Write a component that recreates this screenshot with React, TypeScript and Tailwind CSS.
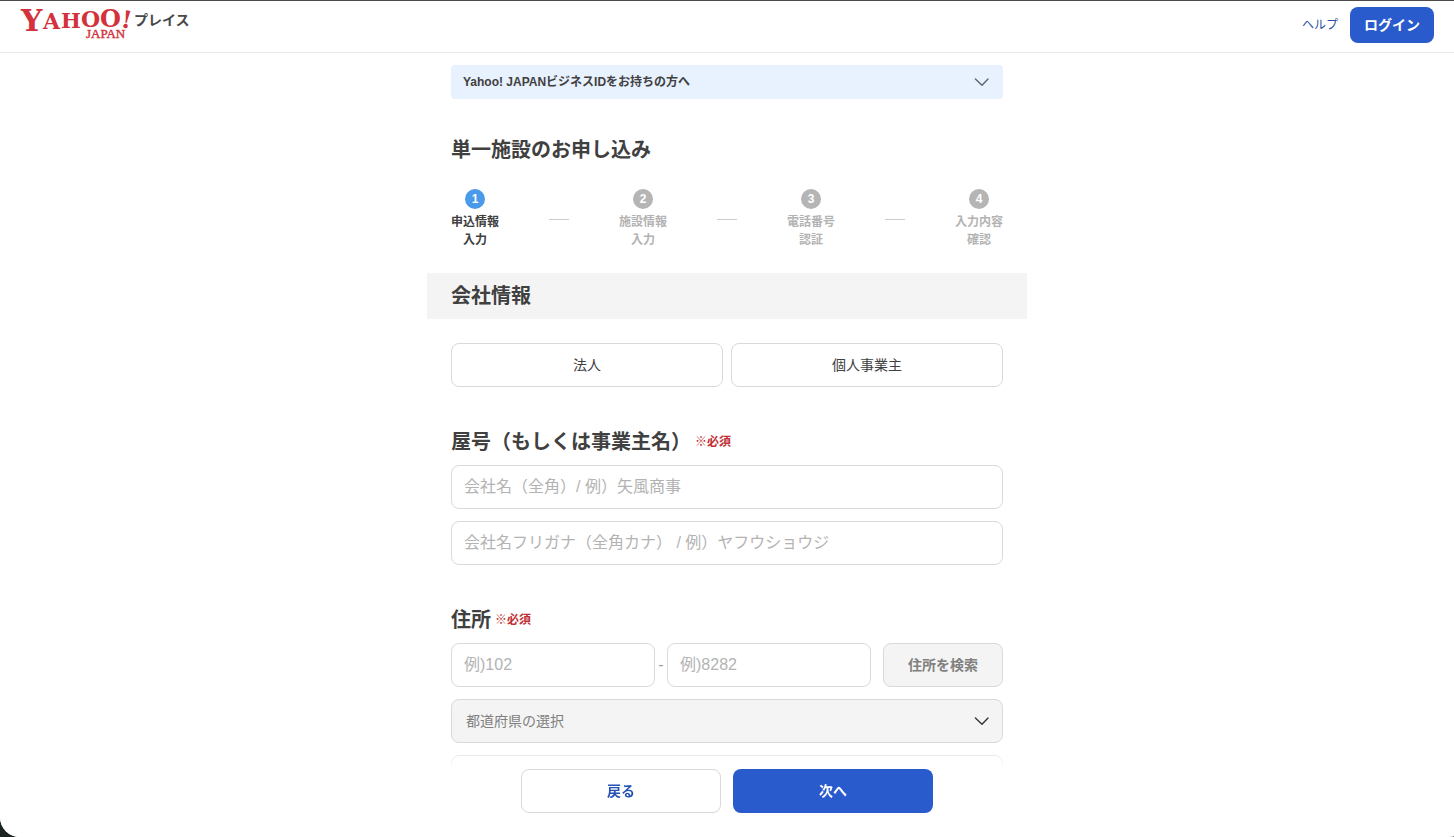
import { useState } from "react";
import type { ReactNode } from "react";

interface Step {
  id: number;
  lines: [string, string];
}

const steps: Step[] = [
  { id: 1, lines: ["申込情報", "入力"] },
  { id: 2, lines: ["施設情報", "入力"] },
  { id: 3, lines: ["電話番号", "認証"] },
  { id: 4, lines: ["入力内容", "確認"] },
];

const inputClass =
  "h-11 w-full min-w-0 rounded-lg border border-[#d9d9d9] bg-white px-3 text-base text-[#404040] placeholder:text-[#b3b3b3]";

function Logo() {
  return (
    <a href="#" className="flex items-start" aria-label="Yahoo! JAPAN プレイス">
      <svg
        width="114"
        height="34"
        viewBox="0 0 114 34"
        fill="#d3323c"
        fontFamily="'DejaVu Serif', serif"
        fontWeight="700"
        className="overflow-visible"
      >
        <text x="1" y="24" fontSize="30">Y</text>
        <text x="23" y="22" fontSize="22">A</text>
        <text x="41" y="21" fontSize="21">H</text>
        <text x="61" y="20" fontSize="22">O</text>
        <text x="80" y="20" fontSize="24">O</text>
        <text x="0" y="0" fontSize="24" transform="translate(100 20) rotate(10)">!</text>
        <text
          x="66"
          y="31"
          fontSize="13"
          fontFamily="'Liberation Serif', serif"
          fontWeight="400"
          stroke="#d3323c"
          strokeWidth="0.4"
        >
          JAPAN
        </text>
      </svg>
      <span className="mt-[3px] text-sm font-bold text-[#484848]">プレイス</span>
    </a>
  );
}

function Header() {
  return (
    <header className="flex items-start justify-between border-t border-b border-t-[#4a4a4a] border-b-[#e8e8e8] pt-1.5 pr-5 pb-[9px] pl-5">
      <Logo />
      <div className="flex items-center gap-3">
        <a href="#" className="text-xs text-[#2a52a0]">
          ヘルプ
        </a>
        <button className="h-9 rounded-lg bg-[#295bcd] px-3.5 text-sm font-bold text-white">
          ログイン
        </button>
      </div>
    </header>
  );
}

function Chevron({ className }: { className: string }) {
  return (
    <svg
      viewBox="0 0 16 16"
      fill="none"
      stroke="currentColor"
      strokeWidth="1.4"
      strokeLinecap="round"
      strokeLinejoin="round"
      className={className}
    >
      <path d="M2.4 5 9 11.2l6-6.2" />
    </svg>
  );
}

function StepItem({ step, active }: { step: Step; active: boolean }) {
  return (
    <div
      className={`flex w-12 flex-col items-center text-center text-xs font-bold ${
        active ? "text-[#404040]" : "text-[#b3b3b3]"
      }`}
    >
      <span
        className={`mb-1 flex size-5 items-center justify-center rounded-full text-white ${
          active ? "bg-[#4a9aea]" : "bg-[#b5b5b5]"
        }`}
      >
        {step.id}
      </span>
      <span className="leading-[18px]">
        {step.lines[0]}
        <br />
        {step.lines[1]}
      </span>
    </div>
  );
}

function Stepper({ current }: { current: number }) {
  return (
    <ol className="mt-6 flex items-center justify-between">
      {steps.map((step, i) => (
        <li key={step.id} className="contents">
          {i > 0 && <span className="h-px w-5 bg-[#ccc]" />}
          <StepItem step={step} active={step.id === current} />
        </li>
      ))}
    </ol>
  );
}

function FieldLabel({ htmlFor, children }: { htmlFor: string; children: ReactNode }) {
  return (
    <label htmlFor={htmlFor} className="mt-10 mb-2 flex items-center gap-1 text-xl leading-[30px] font-bold">
      {children}
      <span className="text-xs text-[#c02d33]">※必須</span>
    </label>
  );
}

export default function App() {
  const [companyType, setCompanyType] = useState("");

  return (
    <div className="h-screen bg-[#1c2422]">
      <div className="flex h-full flex-col overflow-hidden rounded-bl-[20px] rounded-br-[14px_1px] bg-white font-['Liberation_Sans','Noto_Sans_CJK_JP',sans-serif] text-[#404040]">
        <Header />
        <main className="min-h-0 flex-1 overflow-y-auto [scrollbar-width:none]">
          <form className="mx-auto max-w-[600px] pt-3" onSubmit={(e) => e.preventDefault()}>
            <div className="px-6">
              <button
                type="button"
                className="flex w-full items-center justify-between rounded-sm bg-[#e8f1fe] py-2 pr-3.5 pl-3 text-xs leading-[18px] font-bold"
              >
                Yahoo! JAPANビジネスIDをお持ちの方へ
                <Chevron className="size-4 text-[#5c646e]" />
              </button>
              <h1 className="mt-9 text-xl leading-[30px] font-bold">単一施設のお申し込み</h1>
              <Stepper current={1} />
            </div>

            <h2 className="mt-6 bg-[#f4f4f4] px-6 py-2 text-xl leading-[30px] font-bold">会社情報</h2>

            <div className="px-6 pt-6">
              <div className="grid grid-cols-2 gap-2">
                {["法人", "個人事業主"].map((type) => (
                  <button
                    key={type}
                    type="button"
                    aria-pressed={companyType === type}
                    onClick={() => setCompanyType(type)}
                    className={`h-11 rounded-lg border text-sm ${
                      companyType === type ? "border-[#295bcd]" : "border-[#d9d9d9]"
                    }`}
                  >
                    {type}
                  </button>
                ))}
              </div>

              <FieldLabel htmlFor="company">屋号（もしくは事業主名）</FieldLabel>
              <div className="flex flex-col gap-3">
                <input id="company" className={inputClass} placeholder="会社名（全角）/ 例）矢風商事" />
                <input
                  aria-label="会社名フリガナ"
                  className={inputClass}
                  placeholder="会社名フリガナ（全角カナ） / 例）ヤフウショウジ"
                />
              </div>

              <FieldLabel htmlFor="zip">住所</FieldLabel>
              <div className="flex flex-col gap-3">
                <div className="flex items-center">
                  <input id="zip" className={inputClass} placeholder="例)102" />
                  <span className="w-3 shrink-0 text-center text-base text-[#a0a0a0]">-</span>
                  <input aria-label="郵便番号 下4桁" className={inputClass} placeholder="例)8282" />
                  <button
                    type="button"
                    className="ml-3 h-11 w-[120px] shrink-0 rounded-lg border border-[#d9d9d9] bg-[#f4f4f4] text-sm font-bold text-[#808080]"
                  >
                    住所を検索
                  </button>
                </div>
                <div className="grid items-center">
                  <select
                    aria-label="都道府県"
                    className="col-start-1 row-start-1 h-11 appearance-none rounded-lg border border-[#d9d9d9] bg-[#f4f4f4] px-3.5 text-sm text-[#808080]"
                  >
                    <option>都道府県の選択</option>
                  </select>
                  <Chevron className="pointer-events-none col-start-1 row-start-1 mr-3.5 size-4 justify-self-end text-[#333]" />
                </div>
                <input aria-label="市区町村" className={inputClass} />
              </div>
            </div>
          </form>

          <div className="sticky bottom-0 flex justify-center gap-3 bg-[linear-gradient(to_bottom,#ffffff00,#ffffff_24px)] px-6 py-6 text-sm font-bold">
            <button type="button" className="h-11 w-[200px] rounded-lg border border-[#d9d9d9] bg-white text-[#2452b4]">
              戻る
            </button>
            <button type="button" className="h-11 w-[200px] rounded-lg bg-[#295bcd] text-white">
              次へ
            </button>
          </div>
        </main>
      </div>
    </div>
  );
}
